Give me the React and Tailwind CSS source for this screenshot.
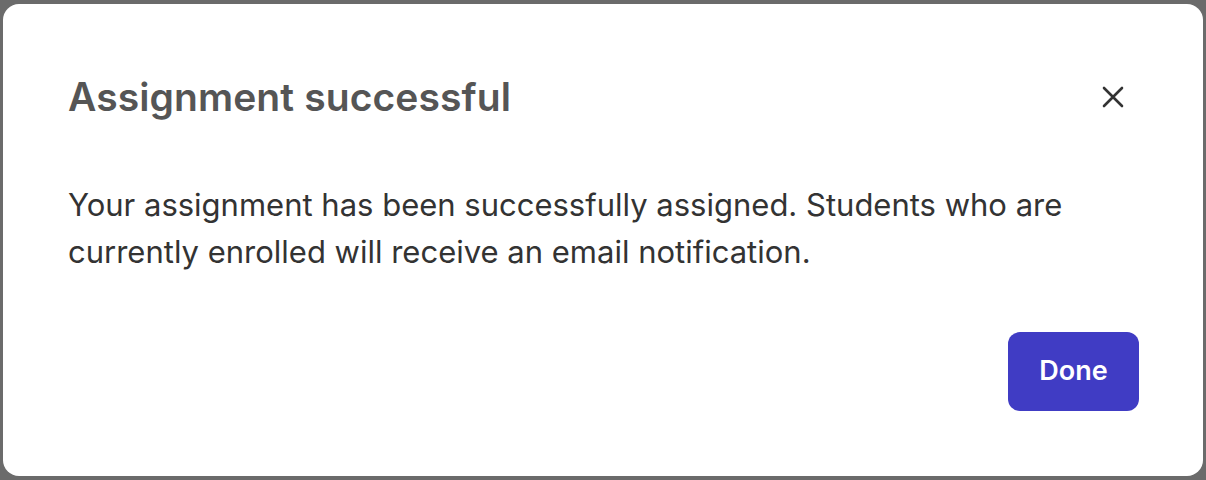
import React from 'react';

// Success dialog shown after assigning work
const App = () => {
    return (
        <div className="w-[1206px] h-[480px] bg-[#6b6b6b] pl-[3px] pr-[3px] pt-[4px] pb-[4px] font-['Inter',sans-serif]">
            <div className="bg-white rounded-[16px] h-full pl-[65px] pr-[64px] pt-[69px] flex flex-col">
                <div className="flex items-center justify-between">
                    <h2 className="text-[39px] leading-[48px] font-semibold text-[#555555] tracking-[0.1px]">Assignment successful</h2>
                    <button className="w-[40px] h-[40px] flex items-center justify-center text-[#333333] mr-[6px]">
                        <svg width="22" height="22" viewBox="0 0 22 22" fill="none" stroke="currentColor" strokeWidth="2.6" strokeLinecap="round">
                            <path d="M2 2L20 20M20 2L2 20" />
                        </svg>
                    </button>
                </div>
                <p className="mt-[60px] text-[31px] leading-[47px] text-[#333333]">
                    Your assignment has been successfully assigned. Students who are currently enrolled will receive an email notification.
                </p>
                <div className="flex justify-end mt-[57px]">
                    <button className="w-[131px] h-[79px] rounded-[12px] bg-[#403cc4] text-white text-[27px] font-semibold">Done</button>
                </div>
            </div>
        </div>
    );
};

export default App;
